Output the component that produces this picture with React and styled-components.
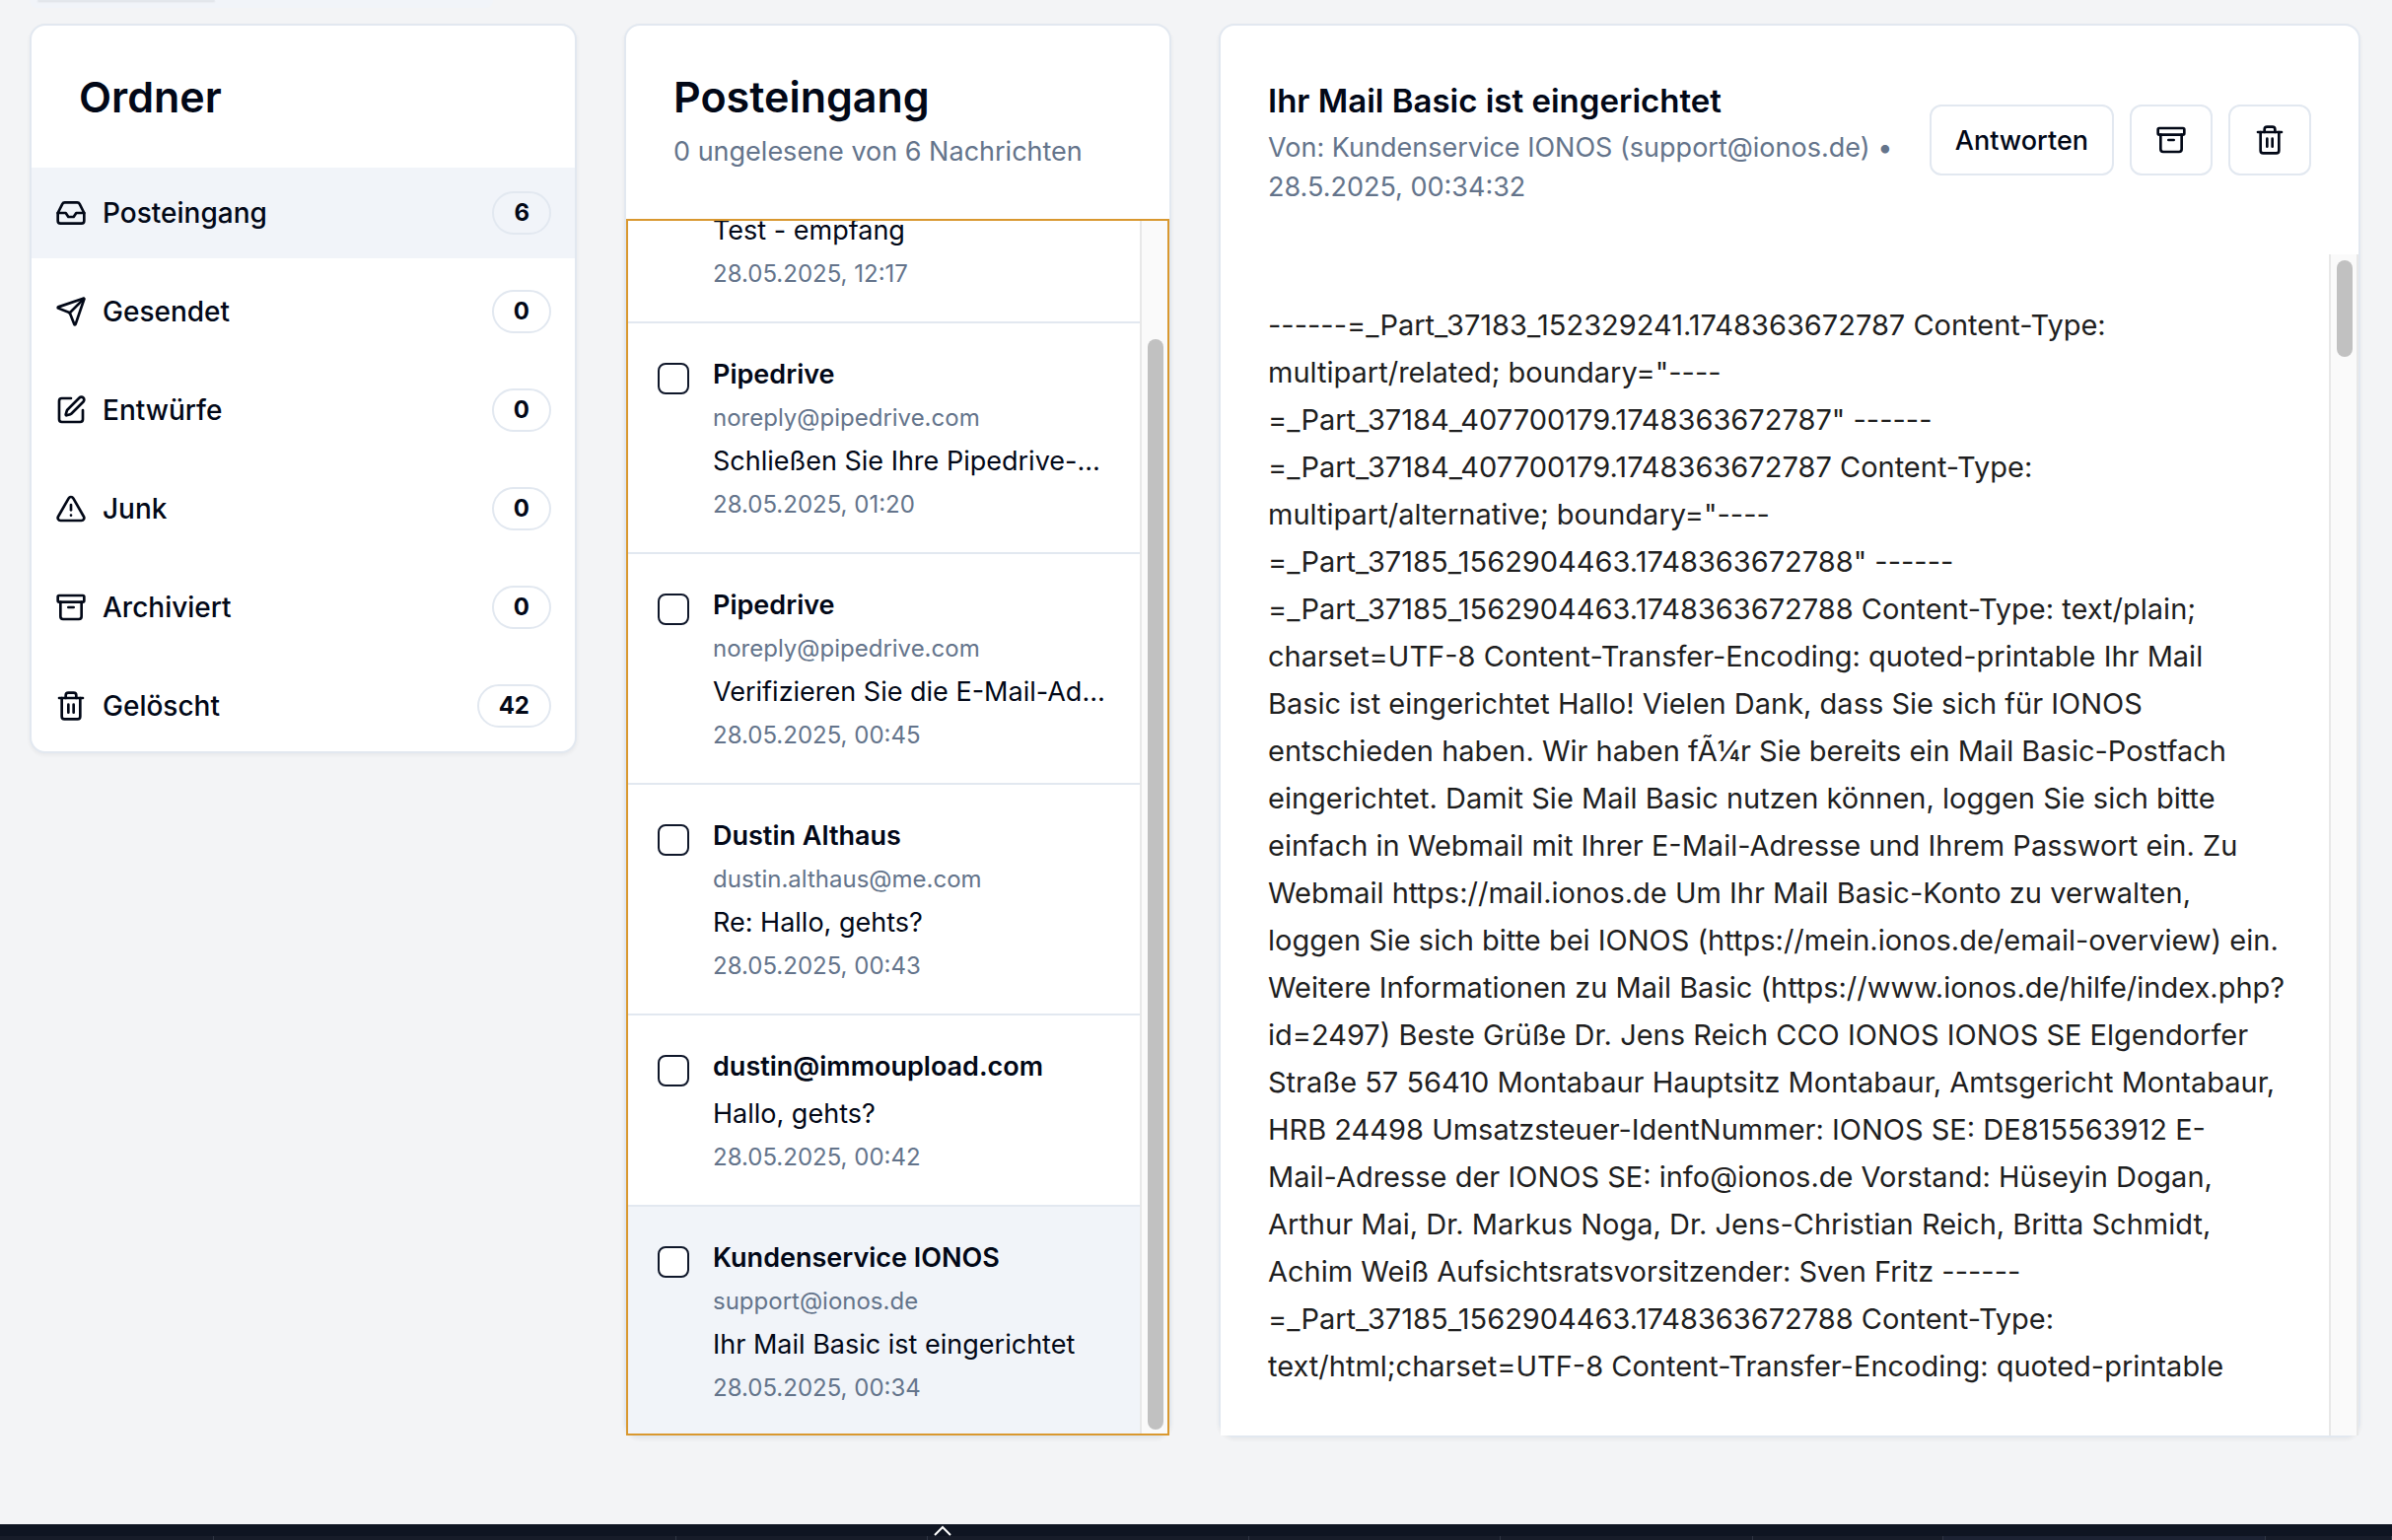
import React from "react";
import styled, { createGlobalStyle } from "styled-components";
import { Inbox, Send, SquarePen, TriangleAlert, Archive, Trash2 } from "lucide-react";

const color = {
  page: "#f3f4f6",
  card: "#ffffff",
  line: "#e2e8f0",
  soft: "#f1f4f9",
  ink: "#020817",
  muted: "#64748b",
  focus: "#d9982f",
  dark: "#0f1522",
};

const GlobalStyle = createGlobalStyle`
  * { box-sizing: border-box; }
  body {
    margin: 0;
    background: ${color.page};
    color: ${color.ink};
    font-family: Inter, "Liberation Sans", sans-serif;
    font-size: 27px;
  }
  h1, h2, p, ul { margin: 0; padding: 0; }
  ul { list-style: none; }
  button { font: inherit; color: inherit; }
`;

const Page = styled.div`
  min-height: 100vh;
  display: flex;
  flex-direction: column;
`;

const TabStrip = styled.div`
  width: 470px;
  height: 8px;
  margin-left: 30px;
  padding-left: 8px;
  background: ${color.soft};
  border-radius: 0 0 12px 12px;
`;

const ActiveTab = styled.div`
  width: 180px;
  height: 1px;
  background: #e3e7ec;
  border-radius: 0 0 8px 8px;
  box-shadow: 0 1px 2px rgba(0, 0, 0, 0.12);
`;

const Columns = styled.main`
  flex: 1;
  display: grid;
  grid-template-columns: repeat(4, minmax(0, 1fr));
  gap: 48px;
  padding: 16px 32px 88px 30px;
`;

const Card = styled.section`
  grid-column: span ${(p) => p.$span || 1};
  align-self: ${(p) => (p.$fit ? "start" : "stretch")};
  display: flex;
  flex-direction: column;
  min-width: 0;
  background: ${color.card};
  border: 2px solid ${color.line};
  border-radius: 16px;
  box-shadow: 0 2px 4px rgba(0, 0, 0, 0.05);
`;

const CardHeader = styled.header`
  display: flex;
  align-items: center;
  justify-content: space-between;
  gap: 16px;
  padding: 48px;
`;

const HeaderText = styled.div`
  min-width: 0;
  display: flex;
  flex-direction: column;
  gap: ${(p) => p.$gap || 0}px;
`;

const Title = styled.h1`
  font-size: 43px;
  line-height: 48px;
  font-weight: 600;
`;

const MailTitle = styled.h2`
  font-size: 33px;
  line-height: 56px;
  font-weight: 600;
`;

const Subtitle = styled.p`
  line-height: 40px;
  color: ${color.muted};
  white-space: nowrap;
`;

const FolderList = styled.ul`
  display: flex;
  flex-direction: column;
  gap: 8px;
`;

const FolderButton = styled.button`
  width: 100%;
  height: 92px;
  display: flex;
  align-items: center;
  gap: 16px;
  padding: 0 24px;
  border: 0;
  border-radius: ${(p) => (p.$last ? "0 0 14px 14px" : 0)};
  background: ${(p) => (p.$active ? color.soft : "transparent")};
  font-size: 28px;
  font-weight: 500;
  text-align: left;
`;

const FolderName = styled.span`
  flex: 1;
`;

const Badge = styled.span`
  height: 44px;
  padding: 0 20px;
  border: 2px solid ${color.line};
  border-radius: 22px;
  font-size: 24px;
  line-height: 40px;
  font-weight: 700;
`;

const MessagePane = styled.div`
  flex: 1;
  contain: size;
  display: flex;
  outline: 2px solid ${color.focus};
  outline-offset: -2px;
`;

const MessageList = styled.ul`
  flex: 1;
  min-width: 0;
  display: flex;
  flex-direction: column;
  justify-content: flex-end;
  overflow: hidden;
`;

const MessageRow = styled.li`
  flex: none;
  display: flex;
  gap: 24px;
  padding: 31px 24px 31px 32px;
  border-bottom: 2px solid ${color.line};
  background: ${(p) => (p.$active ? color.soft : "transparent")};
  &:last-child { border-bottom: 0; }
`;

const Check = styled.input`
  appearance: none;
  flex: none;
  width: 32px;
  height: 32px;
  margin: 9px 0 0;
  border: 2px solid #0f172a;
  border-radius: 8px;
  background: ${color.card};
  visibility: ${(p) => (p.$concealed ? "hidden" : "visible")};
`;

const MessageText = styled.label`
  flex: 1;
  min-width: 0;
  display: flex;
  flex-direction: column;
  gap: 6px;
`;

const Line = styled.span`
  line-height: 42px;
  font-weight: ${(p) => (p.$strong ? 600 : 400)};
  white-space: nowrap;
`;

const Meta = styled.span`
  font-size: 24px;
  line-height: 34px;
  color: ${color.muted};
`;

const ScrollTrack = styled.div`
  flex: none;
  display: flex;
  flex-direction: column;
  justify-content: ${(p) => (p.$end ? "flex-end" : "flex-start")};
  width: 30px;
  padding: 6px;
  background: #fafafa;
  border: solid #e8e8e8;
  border-width: 0 2px;
`;

const ScrollThumb = styled.div`
  width: 16px;
  height: ${(p) => p.$size};
  border-radius: 8px;
  background: #c1c1c1;
`;

const Actions = styled.div`
  flex: none;
  display: flex;
  gap: 16px;
`;

const ActionButton = styled.button`
  height: 72px;
  min-width: 84px;
  display: flex;
  align-items: center;
  justify-content: center;
  padding: 0 24px;
  border: 2px solid ${color.line};
  border-radius: 12px;
  background: ${color.card};
  font-weight: 500;
`;

const MailPane = styled.div`
  flex: 1;
  display: flex;
  background: ${color.card};
`;

const MailBody = styled.div`
  flex: 1;
  min-width: 0;
  padding: 48px 0 46px 48px;
  color: #1f1f1f;
  font-size: 29px;
  line-height: 48px;
  white-space: nowrap;
`;

const Footer = styled.footer`
  height: 16px;
  overflow: hidden;
  background: ${color.dark};
`;

const FooterToggle = styled.button`
  display: flex;
  justify-content: center;
  width: 20px;
  height: 12px;
  margin-left: 39%;
  padding: 1px 0 0;
  border: 0;
  background: none;
  color: #ffffff;
`;

const FooterTabs = styled.div`
  height: 4px;
  display: grid;
  grid-template-columns: 217fr 469fr 255fr 326fr 255fr 256fr 193fr 327fr 128fr;
`;

const FooterTab = styled.div`
  background: ${(p) => (p.$active ? "#1c2233" : "#171c29")};
  border-right: 1px solid #2f3543;
`;

const folders = [
  { name: "Posteingang", count: 6, icon: Inbox },
  { name: "Gesendet", count: 0, icon: Send },
  { name: "Entwürfe", count: 0, icon: SquarePen },
  { name: "Junk", count: 0, icon: TriangleAlert },
  { name: "Archiviert", count: 0, icon: Archive },
  { name: "Gelöscht", count: 42, icon: Trash2 },
];

const messages = [
  { subject: "Test - empfang", date: "28.05.2025, 12:17" },
  { from: "Pipedrive", email: "noreply@pipedrive.com", subject: "Schließen Sie Ihre Pipedrive-…", date: "28.05.2025, 01:20" },
  { from: "Pipedrive", email: "noreply@pipedrive.com", subject: "Verifizieren Sie die E-Mail-Ad…", date: "28.05.2025, 00:45" },
  { from: "Dustin Althaus", email: "dustin.althaus@me.com", subject: "Re: Hallo, gehts?", date: "28.05.2025, 00:43" },
  { from: "dustin@immoupload.com", subject: "Hallo, gehts?", date: "28.05.2025, 00:42" },
  { from: "Kundenservice IONOS", email: "support@ionos.de", subject: "Ihr Mail Basic ist eingerichtet", date: "28.05.2025, 00:34" },
];

const mailLines = [
  "------=_Part_37183_152329241.1748363672787 Content-Type:",
  'multipart/related; boundary="----',
  '=_Part_37184_407700179.1748363672787" ------',
  "=_Part_37184_407700179.1748363672787 Content-Type:",
  'multipart/alternative; boundary="----',
  '=_Part_37185_1562904463.1748363672788" ------',
  "=_Part_37185_1562904463.1748363672788 Content-Type: text/plain;",
  "charset=UTF-8 Content-Transfer-Encoding: quoted-printable Ihr Mail",
  "Basic ist eingerichtet Hallo! Vielen Dank, dass Sie sich für IONOS",
  "entschieden haben. Wir haben fÃ¼r Sie bereits ein Mail Basic-Postfach",
  "eingerichtet. Damit Sie Mail Basic nutzen können, loggen Sie sich bitte",
  "einfach in Webmail mit Ihrer E-Mail-Adresse und Ihrem Passwort ein. Zu",
  "Webmail https://mail.ionos.de Um Ihr Mail Basic-Konto zu verwalten,",
  "loggen Sie sich bitte bei IONOS (https://mein.ionos.de/email-overview) ein.",
  "Weitere Informationen zu Mail Basic (https://www.ionos.de/hilfe/index.php?",
  "id=2497) Beste Grüße Dr. Jens Reich CCO IONOS IONOS SE Elgendorfer",
  "Straße 57 56410 Montabaur Hauptsitz Montabaur, Amtsgericht Montabaur,",
  "HRB 24498 Umsatzsteuer-IdentNummer: IONOS SE: DE815563912 E-",
  "Mail-Adresse der IONOS SE: info@ionos.de Vorstand: Hüseyin Dogan,",
  "Arthur Mai, Dr. Markus Noga, Dr. Jens-Christian Reich, Britta Schmidt,",
  "Achim Weiß Aufsichtsratsvorsitzender: Sven Fritz ------",
  "=_Part_37185_1562904463.1748363672788 Content-Type:",
  "text/html;charset=UTF-8 Content-Transfer-Encoding: quoted-printable",
];

const footerTabs = [0, 1, 2, 3, 4, 5, 6, 7, 8];

function Message({ id, message, active }) {
  return (
    <MessageRow $active={active}>
      <Check type="checkbox" id={id} $concealed={!message.from} />
      <MessageText htmlFor={id}>
        {message.from && <Line $strong>{message.from}</Line>}
        {message.email && <Meta>{message.email}</Meta>}
        <Line>{message.subject}</Line>
        <Meta>{message.date}</Meta>
      </MessageText>
    </MessageRow>
  );
}

export default function App() {
  return (
    <Page>
      <GlobalStyle />
      <TabStrip>
        <ActiveTab />
      </TabStrip>
      <Columns>
        <Card $fit>
          <CardHeader>
            <Title>Ordner</Title>
          </CardHeader>
          <FolderList>
            {folders.map(({ name, count, icon: Icon }, i) => (
              <li key={name}>
                <FolderButton type="button" $active={i === 0} $last={i === folders.length - 1}>
                  <Icon size={32} />
                  <FolderName>{name}</FolderName>
                  <Badge>{count}</Badge>
                </FolderButton>
              </li>
            ))}
          </FolderList>
        </Card>

        <Card>
          <CardHeader>
            <HeaderText $gap={12}>
              <Title as="h2">Posteingang</Title>
              <Subtitle>0 ungelesene von 6 Nachrichten</Subtitle>
            </HeaderText>
          </CardHeader>
          <MessagePane>
            <MessageList>
              {messages.map((m, i) => (
                <Message key={m.date} id={`message-${i}`} message={m} active={i === messages.length - 1} />
              ))}
            </MessageList>
            <ScrollTrack $end>
              <ScrollThumb $size="calc(90% + 6px)" />
            </ScrollTrack>
          </MessagePane>
        </Card>

        <Card $span={2}>
          <CardHeader>
            <HeaderText>
              <MailTitle>Ihr Mail Basic ist eingerichtet</MailTitle>
              <Subtitle>
                Von: Kundenservice IONOS (support@ionos.de) •<br />
                28.5.2025, 00:34:32
              </Subtitle>
            </HeaderText>
            <Actions>
              <ActionButton type="button">Antworten</ActionButton>
              <ActionButton type="button" aria-label="Archivieren">
                <Archive size={32} />
              </ActionButton>
              <ActionButton type="button" aria-label="Löschen">
                <Trash2 size={32} />
              </ActionButton>
            </Actions>
          </CardHeader>
          <MailPane>
            <MailBody>
              {mailLines.map((line) => (
                <p key={line}>{line}</p>
              ))}
            </MailBody>
            <ScrollTrack>
              <ScrollThumb $size="98px" />
            </ScrollTrack>
          </MailPane>
        </Card>
      </Columns>
      <Footer>
        <FooterToggle type="button" aria-label="Leiste öffnen">
          <svg width="20" height="11" viewBox="0 0 20 11" fill="none" stroke="currentColor" strokeWidth="2">
            <path d="M2 10 10 2l8 8" />
          </svg>
        </FooterToggle>
        <FooterTabs>
          {footerTabs.map((n) => (
            <FooterTab key={n} $active={n === 7} />
          ))}
        </FooterTabs>
      </Footer>
    </Page>
  );
}
